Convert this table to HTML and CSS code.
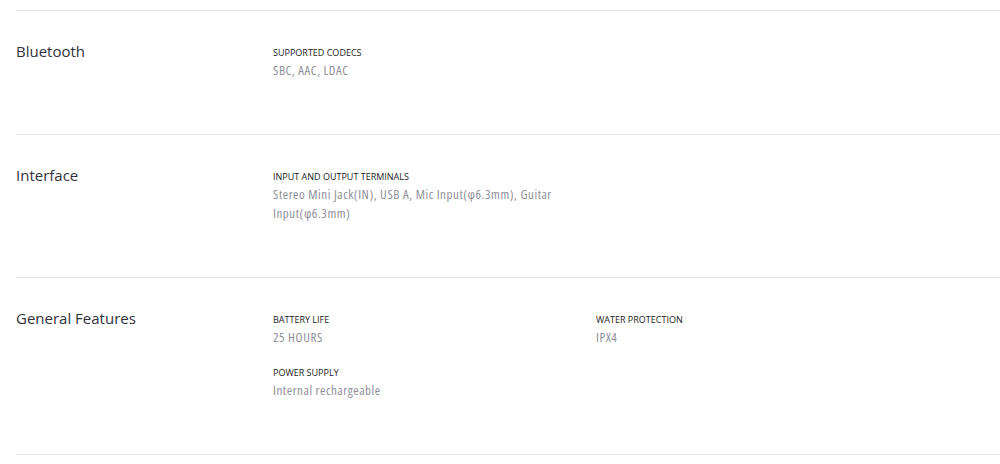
FILE: index.html
```html
<!DOCTYPE html>
<html lang="en">
<head>
<meta charset="utf-8">
<title>Specifications</title>
<link rel="stylesheet" href="styles.css">
</head>
<body>
<div class="specs">
  <section class="spec-row">
    <h3 class="spec-title">Bluetooth</h3>
    <div class="spec-grid">
      <div class="spec-item">
        <div class="spec-label">SUPPORTED CODECS</div>
        <div class="spec-value">SBC, AAC, LDAC</div>
      </div>
    </div>
  </section>
  <section class="spec-row">
    <h3 class="spec-title">Interface</h3>
    <div class="spec-grid">
      <div class="spec-item">
        <div class="spec-label">INPUT AND OUTPUT TERMINALS</div>
        <div class="spec-value">Stereo Mini Jack(IN), USB A, Mic Input(φ6.3mm), Guitar Input(φ6.3mm)</div>
      </div>
    </div>
  </section>
  <section class="spec-row">
    <h3 class="spec-title">General Features</h3>
    <div class="spec-grid">
      <div class="spec-item">
        <div class="spec-label">BATTERY LIFE</div>
        <div class="spec-value">25 HOURS</div>
      </div>
      <div class="spec-item">
        <div class="spec-label">WATER PROTECTION</div>
        <div class="spec-value">IPX4</div>
      </div>
      <div class="spec-item">
        <div class="spec-label">POWER SUPPLY</div>
        <div class="spec-value">Internal rechargeable</div>
      </div>
    </div>
  </section>
</div>
</body>
</html>
```

FILE: styles.css
```css
* { box-sizing: border-box; }
html, body { margin: 0; padding: 0; background: #fff; }
body {
  font-family: "Open Sans", "Noto Sans", sans-serif;
  color: #222;
  padding: 10px 0 0 16px;
}
.specs {
  border-bottom: 1px solid #e6e6ea;
}
.spec-row {
  display: grid;
  grid-template-columns: 257px 1fr;
  align-items: start;
  border-top: 1px solid #e6e6e6;
  padding: 32px 0 54px;
}
.spec-title {
  margin: 0;
  font-size: 15px;
  font-weight: 400;
  line-height: 16px;
  color: #32323c;
  font-stretch: 88%;
}
.spec-grid {
  display: grid;
  grid-template-columns: 300px 300px;
  column-gap: 23px;
  row-gap: 18px;
  margin-top: 2px;
}
.spec-label {
  font-size: 9px;
  line-height: 16px;
  color: #222;
  font-stretch: 92%;
  text-transform: uppercase;
}
.spec-value {
  font-size: 13px;
  line-height: 19px;
  color: #8f8f99;
  font-weight: 400;
  font-stretch: 75%;
  letter-spacing: 0.55px;
}
```
